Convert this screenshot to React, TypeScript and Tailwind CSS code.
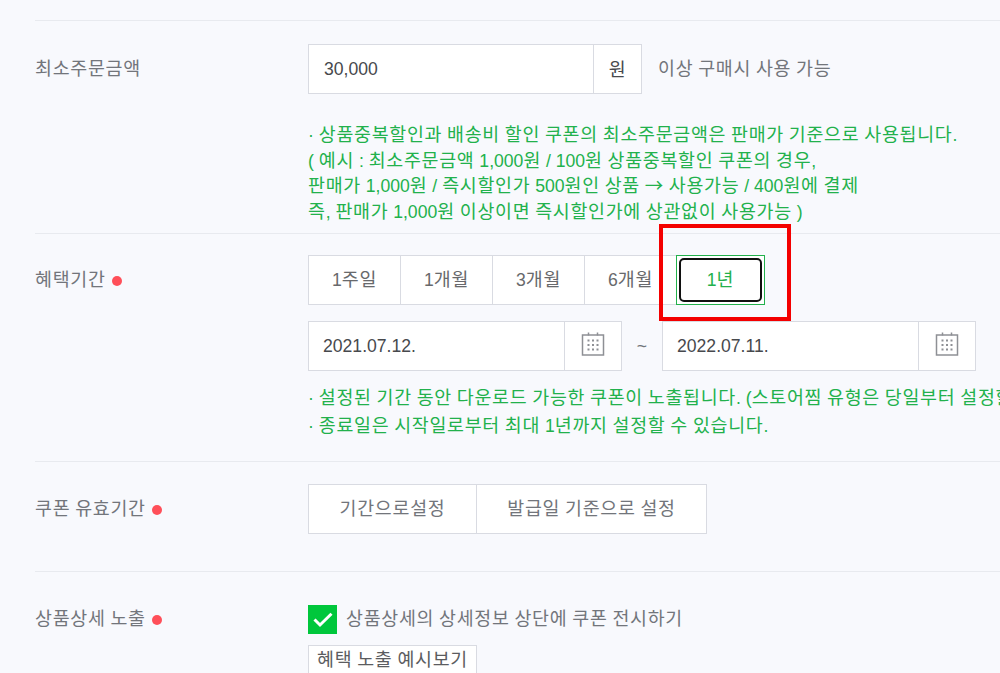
import { Fragment } from "react";
import type { ReactNode } from "react";

const HANGUL = /([가-힣→]+)/;

function Txt({ children }: { children: string }) {
  return (
    <>
      {children.split(HANGUL).map((part, i) =>
        HANGUL.test(part) ? (
          <span key={i} className="font-['Noto_Sans_CJK_KR',sans-serif] text-[18.4px] leading-none tracking-[0.71px]">{part}</span>
        ) : (
          <Fragment key={i}>{part}</Fragment>
        )
      )}
    </>
  );
}

function Row({ label, required, className, children }: { label: string; required?: boolean; className: string; children: ReactNode }) {
  return (
    <section className={`flex border-t border-[#e8eaef] ${className}`}>
      <div className="flex w-[273px] h-[50px] shrink-0 items-center text-[#72757b]">
        <span><Txt>{label}</Txt></span>
        {required && <i className="ml-1.5 mt-0.5 h-2.5 w-2.5 rounded-full bg-[#ff4f59]" />}
      </div>
      <div className="min-w-0 flex-1">{children}</div>
    </section>
  );
}

function CalendarIcon() {
  const steps = [6.5, 11, 15.5];
  return (
    <svg width="24" height="24" viewBox="0 0 24 24" fill="none" stroke="#8e9095" strokeWidth="1.5">
      <rect x="1.5" y="3" width="21" height="20" />
      <path d="M7.5 .5v3M16.5 .5v3" />
      {steps.map((y) => steps.map((x) => (
        <rect key={`${x}-${y}`} x={x} y={y + 1} width="2" height="2" fill="#8e9095" stroke="none" />
      )))}
    </svg>
  );
}

function DateField({ value, className }: { value: string; className: string }) {
  return (
    <div className={`flex h-[50px] border border-[#d9dbe2] bg-white ${className}`}>
      <div className="flex flex-1 items-center pl-3.5 text-[#47494d]">{value}</div>
      <button type="button" className="flex w-[57px] items-center justify-center border-l border-[#d9dbe2] pb-1">
        <CalendarIcon />
      </button>
    </div>
  );
}

const periods = ["1주일", "1개월", "3개월", "6개월"];

export default function App() {
  return (
    <div className="relative h-[673px] w-[1000px] overflow-hidden bg-[#f8f9fd] pl-[35px] pt-5 font-['Liberation_Sans','Noto_Sans_CJK_KR',sans-serif] text-[17.6px] whitespace-nowrap">
      <Row label="최소주문금액" className="h-[213px] pt-[23px]">
        <div className="flex items-center">
          <div className="flex h-[50px] w-[334px] border border-[#d9dbe2] bg-white text-[#47494d]">
            <div className="flex flex-1 items-center pl-[15px]">30,000</div>
            <div className="flex w-[48px] items-center justify-center border-l border-[#d9dbe2] pb-0.5"><Txt>원</Txt></div>
          </div>
          <span className="ml-4 text-[#72757b]"><Txt>이상 구매시 사용 가능</Txt></span>
        </div>
        <div className="mt-[29px] leading-[25.6px] text-[#22b14c]">
          <p><Txt>· 상품중복할인과 배송비 할인 쿠폰의 최소주문금액은 판매가 기준으로 사용됩니다.</Txt></p>
          <p><Txt>( 예시 : 최소주문금액 1,000원 / 100원 상품중복할인 쿠폰의 경우,</Txt></p>
          <p><Txt>판매가 1,000원 / 즉시할인가 500원인 상품 → 사용가능 / 400원에 결제</Txt></p>
          <p><Txt>즉, 판매가 1,000원 이상이면 즉시할인가에 상관없이 사용가능 )</Txt></p>
        </div>
      </Row>

      <Row label="혜택기간" required className="h-[228px] pt-[21px]">
        <div className="flex">
          {periods.map((p) => (
            <button key={p} type="button" className="-mr-px h-[50px] w-[93px] border border-[#d9dbe2] bg-white text-[#68696c]">
              <Txt>{p}</Txt>
            </button>
          ))}
          <button type="button" className="relative h-[50px] w-[89px] border border-[#22b14c] bg-white p-0.5 text-[#22b14c]">
            <span className="flex h-full items-center justify-center rounded-[5px] border-[2.5px] border-[#101010]"><span><Txt>1년</Txt></span></span>
          </button>
        </div>
        <div className="mt-4 flex items-center">
          <DateField value="2021.07.12." className="w-[314px]" />
          <span className="w-[40px] text-center text-[#72757b]">~</span>
          <DateField value="2022.07.11." className="w-[314px]" />
        </div>
        <div className="mt-3.5 leading-[27.5px] text-[#22b14c]">
          <p><Txt>· 설정된 기간 동안 다운로드 가능한 쿠폰이 노출됩니다. (스토어찜 유형은 당일부터 설정할</Txt></p>
          <p><Txt>· 종료일은 시작일로부터 최대 1년까지 설정할 수 있습니다.</Txt></p>
        </div>
      </Row>

      <Row label="쿠폰 유효기간" required className="h-[110px] pt-[22px]">
        <div className="flex text-[#72757b]">
          <button type="button" className="-mr-px h-[50px] w-[169px] border border-[#d9dbe2] bg-white"><Txt>기간으로설정</Txt></button>
          <button type="button" className="h-[50px] w-[231px] border border-[#d9dbe2] bg-white"><Txt>발급일 기준으로 설정</Txt></button>
        </div>
      </Row>

      <Row label="상품상세 노출" required className="h-[110px] pt-[22px]">
        <div className="mt-[11px] flex h-[29px] items-center text-[#72757b]">
          <span className="flex h-[29px] w-[29px] items-center justify-center bg-[#00c73c]">
            <svg width="20" height="16" viewBox="0 0 20 16" fill="none" stroke="#fff" strokeWidth="3">
              <path d="M1.5 7.5 7 13 18.5 1.8" />
            </svg>
          </span>
          <span className="ml-[9px]"><Txt>상품상세의 상세정보 상단에 쿠폰 전시하기</Txt></span>
        </div>
        <button type="button" className="mt-[11px] h-[34px] w-[169px] border border-[#d9dbe2] bg-white pb-1 text-[#5b5c60]"><Txt>혜택 노출 예시보기</Txt></button>
      </Row>

      {/* highlight frame around the selected period */}
      <div className="absolute left-[659px] top-[224px] h-[97px] w-[132px] border-4 border-[#f40000]" />
    </div>
  );
}
